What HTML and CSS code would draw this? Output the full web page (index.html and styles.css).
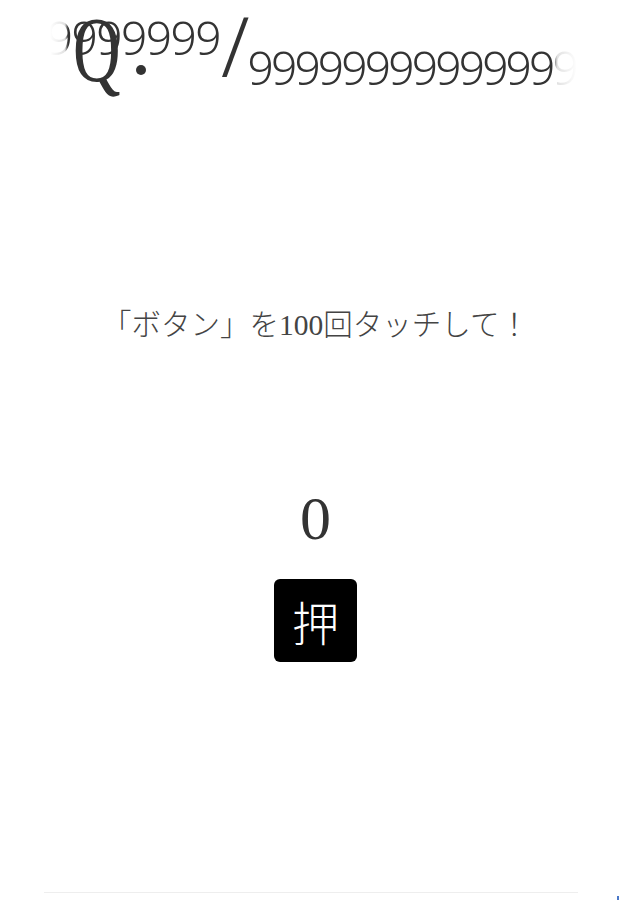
FILE: index.html
```html
<!DOCTYPE html>
<html lang="ja">
<head>
<meta charset="utf-8">
<title>Q.</title>
<link rel="stylesheet" href="styles.css">
</head>
<body>
<header class="header">
  <div class="num-left">9999999999</div>
  <div class="slash">/</div>
  <div class="num-right">99999999999999999</div>
  <div class="q-mark"><span class="q-letter">Q</span><span class="q-dot"></span></div>
</header>
<main class="main">
  <p class="prompt">「ボタン」を100回タッチして！</p>
  <div class="counter">0</div>
  <button class="push" type="button">押</button>
</main>
<footer class="footer"></footer>
<span class="corner-mark"></span>
</body>
</html>
```
FILE: styles.css
```css
html, body {
  margin: 0;
  padding: 0;
  background: #ffffff;
}
body {
  position: relative;
  width: 640px;
  height: 900px;
  overflow: hidden;
  color: #333333;
  font-family: "Noto Sans", "Noto Sans CJK JP", sans-serif;
}
.header {
  position: relative;
  display: flex;
  align-items: flex-start;
  height: 100px;
  padding-left: 50px;
}
.num-left {
  width: 170px;
  margin-top: 14px;
  display: flex;
  justify-content: flex-end;
  overflow: hidden;
  white-space: nowrap;
  font-size: 46px;
  line-height: 46px;
  font-weight: 350;
  letter-spacing: -1.5px;
  color: #333333;
  -webkit-mask-image: linear-gradient(to right, transparent 0, rgba(0,0,0,0.15) 15px, #000 18px);
  mask-image: linear-gradient(to right, transparent 0, rgba(0,0,0,0.15) 15px, #000 18px);
}
.slash {
  margin-left: 1px;
  margin-top: 4px;
  font-size: 82px;
  line-height: 82px;
  font-weight: 300;
  color: #333333;
}
.num-right {
  width: 330px;
  margin-top: 44px;
  margin-left: -2px;
  overflow: hidden;
  white-space: nowrap;
  font-size: 46px;
  line-height: 46px;
  font-weight: 350;
  letter-spacing: -2.8px;
  color: #333333;
  -webkit-mask-image: linear-gradient(to left, transparent 0, rgba(0,0,0,0.15) 20px, #000 24px);
  mask-image: linear-gradient(to left, transparent 0, rgba(0,0,0,0.15) 20px, #000 24px);
}
.q-mark {
  position: absolute;
  left: 73px;
  top: 2px;
  display: flex;
  align-items: flex-start;
  font-family: "Liberation Serif", serif;
  color: #333333;
}
.q-letter {
  display: inline-block;
  font-size: 94px;
  line-height: 94px;
  transform: scaleX(0.7);
  transform-origin: left center;
}
.q-dot {
  display: block;
  width: 10px;
  height: 10px;
  margin-top: 63px;
  margin-left: -5px;
  border-radius: 50%;
  background: #333333;
}
.main {
  display: flex;
  flex-direction: column;
  align-items: center;
  padding-right: 9px;
}
.prompt {
  margin: 208px 0 0 0;
  font-family: "Liberation Serif", "Noto Sans CJK JP", serif;
  font-size: 29.5px;
  line-height: 34px;
  font-weight: 300;
  color: #444444;
}
.counter {
  margin-top: 145px;
  font-family: "Liberation Serif", serif;
  font-size: 62px;
  line-height: 62px;
  color: #333333;
}
.push {
  margin-top: 30px;
  width: 83px;
  height: 83px;
  padding: 0;
  border: none;
  border-radius: 6px;
  background: #000000;
  color: #ffffff;
  display: flex;
  align-items: center;
  justify-content: center;
  font-family: "Noto Sans CJK JP", sans-serif;
  font-size: 47px;
  font-weight: 300;
  line-height: 1;
}
.footer {
  margin: 230px 62px 0 44px;
  height: 0;
  border-top: 1px solid #eeeeee;
}
.corner-mark {
  position: absolute;
  left: 617px;
  top: 896px;
  width: 2px;
  height: 4px;
  background: #4a78c8;
}
```
